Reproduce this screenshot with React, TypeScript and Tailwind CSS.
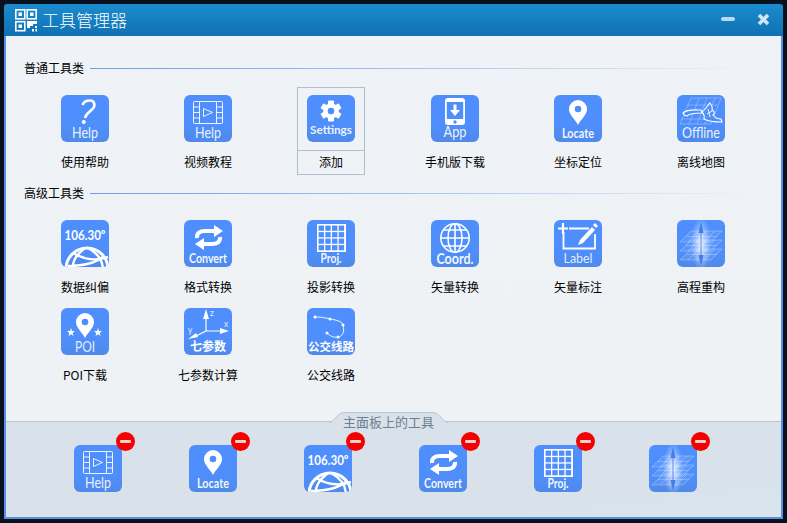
import type { ReactNode } from "react";

const cjk = "font-['Noto_Sans_CJK_SC','Noto_Sans',sans-serif]";

function Cap({ children, size = 14.5, y = 43, o = 0.9, w = 400, len }: { children: ReactNode; size?: number; y?: number; o?: number; w?: number; len?: number }) {
  return (
    <text
      x="24"
      y={y}
      textAnchor="middle"
      fontSize={size}
      fontWeight={w}
      fill="white"
      fillOpacity={o}
      textLength={len}
      lengthAdjust="spacingAndGlyphs"
      fontFamily="Lato,'Noto Sans CJK SC',sans-serif"
    >
      {children}
    </text>
  );
}

function Pin({ cy = 14, r = 9, tip = 30, hole = 3.3 }: { cy?: number; r?: number; tip?: number; hole?: number }) {
  return (
    <>
      <path d={`M24 ${tip} C21 ${tip - 6} ${24 - r} ${cy + 6} ${24 - r} ${cy} A${r} ${r} 0 0 1 ${24 + r} ${cy} C${24 + r} ${cy + 6} 27 ${tip - 6} 24 ${tip}Z`} fill="white" />
      <circle cx="24" cy={cy} r={hole} fill="#4f8ffb" />
    </>
  );
}

function Film() {
  return (
    <g fill="none" stroke="white" strokeOpacity="0.9" strokeWidth="1">
      <rect x="9.500" y="6.500" width="29" height="22" rx="1" />
      <path d="M15.500 6.500V28.500M32.500 6.500V28.500M9.500 12H15.500M9.500 17.500H15.500M9.500 23H15.500M32.500 12H38.500M32.500 17.500H38.500M32.500 23H38.500" />
      <path d="M19.500 13.500L28.500 17.500L19.500 21.500Z" />
    </g>
  );
}

function Globe() {
  return (
    <g fill="none" stroke="white" strokeWidth="3">
      <circle cx="26" cy="49" r="21" />
      <path d="M12 33C24 40 36 41 47 37M7 46C20 46 34 44 43 36M24 28C14 36 11 42 12 50M27 28C38 34 42 42 42 50" strokeWidth="2.400" />
    </g>
  );
}

function Grid4() {
  const cells = [0, 1, 2, 3];
  return (
    <g>
      <rect x="10" y="4" width="29" height="28" fill="white" />
      {cells.map((r) =>
        cells.map((c) => <rect key={`${r}-${c}`} x={11.6 + c * 6.7} y={5.6 + r * 6.5} width="5.4" height="5.2" fill="#4f8ffb" />),
      )}
    </g>
  );
}

function Arrows() {
  return (
    <g>
      <path d="M13 18C12.500 13 16 11 21 11H31M36 17C36.500 22 33 24 28 24H19" fill="none" stroke="white" strokeWidth="4" />
      <path d="M30 5L39 11L30 17ZM20 18L11 24L20 30Z" fill="white" />
    </g>
  );
}

function Plane({ y }: { y: number }) {
  return (
    <g fill="white" fillOpacity="0.08" stroke="white" strokeOpacity="0.38" strokeWidth="0.7">
      <path d={`M3 ${y + 7}L14 ${y - 4}H45L34 ${y + 7}Z`} />
      <path d={`M9 ${y + 1.5}H40M11 ${y + 7}L22 ${y - 4}M19 ${y + 7}L30 ${y - 4}M27 ${y + 7}L38 ${y - 4}`} fill="none" />
    </g>
  );
}

function Elevation() {
  return (
    <g>
      <defs>
        <radialGradient id="elev-glow">
          <stop offset="0" stopColor="white" stopOpacity="0.9" />
          <stop offset="0.5" stopColor="white" stopOpacity="0.4" />
          <stop offset="1" stopColor="white" stopOpacity="0" />
        </radialGradient>
      </defs>
      <ellipse cx="24" cy="24" rx="10" ry="27" fill="url(#elev-glow)" />
      <Plane y={15} />
      <Plane y={24} />
      <Plane y={33} />
      <path d="M24 7V41" stroke="#3f7fe6" strokeWidth="0.900" />
      <path d="M24 2L26.500 13H21.500ZM24 46L26.500 35H21.500Z" fill="#3f7fe6" />
    </g>
  );
}

function Gear() {
  return (
    <g>
      {[0, 60, 120, 180, 240, 300].map((a) => (
        <rect key={a} x="21" y="5.500" width="6" height="5" rx="1" fill="white" transform={`rotate(${a} 24 16)`} />
      ))}
      <circle cx="24" cy="16" r="7.800" fill="white" />
      <circle cx="24" cy="16" r="3.300" fill="#4f8ffb" />
    </g>
  );
}

function Drawing({ name }: { name: string }) {
  switch (name) {
    case "help":
      return (
        <>
          <path d="M21.500 10C22.500 7 26 5.500 29 5.500C33 5.500 34 9 33 12C31 16 25.500 17 24 23" fill="none" stroke="white" strokeWidth="2.600" />
          <circle cx="22.800" cy="27" r="2" fill="white" />
          <Cap len={26}>Help</Cap>
        </>
      );
    case "video":
      return (
        <>
          <Film />
          <Cap len={26}>Help</Cap>
        </>
      );
    case "settings":
      return (
        <>
          <Gear />
          <Cap size={12} y={39} w={700} len={42}>Settings</Cap>
        </>
      );
    case "app":
      return (
        <>
          <rect x="14" y="3" width="20" height="27" rx="3" fill="white" />
          <rect x="15.800" y="7" width="16.400" height="17" fill="#4f8ffb" />
          <circle cx="24" cy="27" r="1.700" fill="#4f8ffb" />
          <path d="M22.500 9.500H25.500V15H29L24 21L19 15H22.500Z" fill="white" />
          <Cap y={42} len={23}>App</Cap>
        </>
      );
    case "locate":
      return (
        <>
          <Pin />
          <Cap size={14} w={700} o={0.95} len={32}>Locate</Cap>
        </>
      );
    case "offline":
      return (
        <>
          <g fill="none" stroke="white" strokeOpacity="0.35" strokeWidth="0.800">
            <path d="M14 3H44L34 29H3Z" />
            <path d="M10 10H41M6 17H38M4 24H36M22 3L12 29M30 3L20 29M38 3L28 29" />
          </g>
          <path d="M6 18C10 14 18 15 24 15L25 18C20 18 13 18 10 21C8 21 7 20 6 18Z" fill="#4f8ffb" stroke="white" strokeWidth="1.100" />
          <path d="M33 8C35 11 36 13 35 15C38 17 38 19 36 20C38 23 41 24 44 24L45 27C39 27 32 27 27 24C28 20 26 18 25 17C28 15 30 11 33 8Z" fill="#4f8ffb" stroke="white" strokeWidth="1.100" />
          <path d="M31 14L33 22M35 16L30 19" fill="none" stroke="white" strokeWidth="0.900" />
          <Cap len={38}>Offline</Cap>
        </>
      );
    case "coord":
      return (
        <>
          <g fill="none" stroke="white" strokeWidth="1.600">
            <circle cx="24" cy="18" r="14.200" />
            <ellipse cx="24" cy="18" rx="7" ry="14.200" />
            <path d="M24 4V32M10 18H38M12.500 10H35.500M12.500 26H35.500" />
          </g>
          <Cap w={700} y={44} o={0.95} len={37}>Coord.</Cap>
        </>
      );
    case "degree":
      return (
        <>
          <text x="24" y="20" textAnchor="middle" fontSize="13.500" fontWeight="700" textLength={41} lengthAdjust="spacingAndGlyphs" fill="white" fontFamily="Lato,sans-serif">
            106.30º
          </text>
          <Globe />
        </>
      );
    case "convert":
      return (
        <>
          <Arrows />
          <Cap size={12.5} w={700} o={0.95} len={38}>Convert</Cap>
        </>
      );
    case "proj":
      return (
        <>
          <Grid4 />
          <Cap size={14} w={700} y={43} o={0.95} len={21}>Proj.</Cap>
        </>
      );
    case "label":
      return (
        <>
          <path d="M9.500 12V28.500H41V14M15 8.500H35" fill="none" stroke="white" strokeWidth="1.800" />
          <path d="M9 3V14M4 8.500H14" fill="none" stroke="white" strokeWidth="2.200" />
          <path d="M24 25L26 20L38 7L41 10L29 23Z" fill="white" />
          <path d="M39 5L41 3L44 6L42 8Z" fill="white" />
          <Cap size={14} o={0.85} len={29}>Label</Cap>
        </>
      );
    case "elevation":
      return <Elevation />;
    case "poi":
      return (
        <>
          <Pin cy={14} />
          <path d="M10 20L11 23H14L11.700 25L12.500 28L10 26.200L7.500 28L8.300 25L6 23H9ZM37 20L38 23H41L38.700 25L39.500 28L37 26.200L34.500 28L35.300 25L33 23H36Z" fill="white" />
          <Cap y={44} o={0.85} len={20}>POI</Cap>
        </>
      );
    case "seven":
      return (
        <>
          <path d="M22 8V23L38 23M22 23L10 29" fill="none" stroke="white" strokeWidth="1.200" />
          <path d="M22 1L25 11H19ZM45 23L36 26V20ZM4 31L12 25L14 29Z" fill="white" />
          <g fontSize="8.500" fill="white" fillOpacity="0.85" fontFamily="Lato,sans-serif">
            <text x="26" y="8">z</text>
            <text x="40" y="19">x</text>
            <text x="4" y="25">y</text>
          </g>
          <Cap size={12} w={700} o={1}>七参数</Cap>
        </>
      );
    default:
      return (
        <>
          <path d="M8 9C14 9 20 10 23 11C30 12 36 14 36 17C38 24 35 29 31 29C27 30 23 28 20 25" fill="none" stroke="white" strokeWidth="0.900" />
          {[[8, 9], [23, 11], [36, 17], [20, 25], [31, 29]].map(([x, y]) => (
            <circle key={x} cx={x} cy={y} r="1.500" fill="white" />
          ))}
          <Cap size={11.5} w={700} o={1}>公交线路</Cap>
        </>
      );
  }
}

function Tile({ name }: { name: string }) {
  return (
    <div className="w-[48px] h-[47px] shrink-0 rounded-[6px] bg-gradient-to-b from-[#4f8ffd] from-60% to-[#4f8aea] overflow-hidden">
      <svg width="48" height="47" viewBox="0 0 48 47">
        <Drawing name={name} />
      </svg>
    </div>
  );
}

function Tool({ name, label, boxed }: { name: string; label: string; boxed?: boolean }) {
  return (
    <div className="relative ml-[38px] w-[48px] flex flex-col items-center">
      {boxed && (
        <div className="absolute left-[-10px] top-[-8px] w-[68px] h-[88px] border border-[#b0bfd0]">
          <div className="mt-[62px] border-t border-[#b0bfd0]" />
        </div>
      )}
      <Tile name={name} />
      <div className={`mt-[12px] h-[16px] leading-[16px] text-[12px] text-black whitespace-nowrap ${cjk}`}>{label}</div>
    </div>
  );
}

function Heading({ title }: { title: string }) {
  return (
    <div className="flex items-center h-[16px] pl-[18px] pr-[26px]">
      <span className={`w-[66px] text-[12px] leading-[16px] text-black whitespace-nowrap ${cjk}`}>{title}</span>
      <div className="flex-1 h-px bg-gradient-to-r from-[#6f9ee8] via-[#a9c4ee] to-transparent" />
    </div>
  );
}

const columns = "grid grid-cols-[123px_123px_124px_123px_123px_123px] auto-rows-[88px] pl-[17px]";

const panelTools = ["video", "locate", "degree", "convert", "proj", "elevation"];

export default function App() {
  return (
    <div className="w-[787px] h-[523px] overflow-hidden bg-[#07121e] pl-[4px] pt-[4px] font-['Noto_Sans','Noto_Sans_CJK_SC',sans-serif]">
      <div className="w-[779px] h-[515px] flex flex-col">
        {/* Title bar */}
        <div className="h-[32px] shrink-0 flex items-center rounded-t-[3px] bg-gradient-to-b from-[#1b8cce] to-[#0f71b3] pl-[11px] pr-[13px]">
          <svg width="22" height="23" viewBox="0 0 22 23" className="shrink-0">
            <g fill="none" stroke="white" strokeWidth="1.600">
              <rect x="0.800" y="0.800" width="9" height="9" />
              <rect x="12.200" y="0.800" width="9" height="9" />
              <rect x="0.800" y="12.700" width="9" height="9" />
            </g>
            <path d="M3.500 3.500H7V7H3.500ZM15 3.500H18.500V7H15ZM3.500 15.500H7V19H3.500ZM12 12H22V15H18V17H15V19H12ZM20 17H22V19H20ZM17 20H19V22.500H17ZM20.500 20H22V22.500H20.500Z" fill="white" />
          </svg>
          <span className={`ml-[5px] text-[17px] font-light leading-[24px] text-white whitespace-nowrap ${cjk}`}>工具管理器</span>
          <div className="ml-auto w-[14px] h-[4px] mb-[3px] rounded-full bg-[#b9dcf0]" />
          <svg width="13" height="13" viewBox="0 0 13 13" className="ml-[22px] shrink-0 mb-[2px]">
            <path d="M2 2L11 11M11 2L2 11" stroke="#cfe6f3" strokeWidth="3.600" />
          </svg>
        </div>

        {/* Body */}
        <div className="flex-1 min-h-0 flex flex-col border-x-2 border-b-2 border-[#5a8de4] bg-[#eff3f6]">
          <div className="flex-1 min-h-0 pt-[24px] bg-gradient-to-b from-[#eff3f7] to-[#eef2f5]">
            <Heading title="普通工具类" />
            <div className={`mt-[19px] ${columns}`}>
              <Tool name="help" label="使用帮助" />
              <Tool name="video" label="视频教程" />
              <Tool name="settings" label="添加" boxed />
              <Tool name="app" label="手机版下载" />
              <Tool name="locate" label="坐标定位" />
              <Tool name="offline" label="离线地图" />
            </div>
            <div className="mt-[2px]">
              <Heading title="高级工具类" />
            </div>
            <div className={`mt-[19px] ${columns}`}>
              <Tool name="degree" label="数据纠偏" />
              <Tool name="convert" label="格式转换" />
              <Tool name="proj" label="投影转换" />
              <Tool name="coord" label="矢量转换" />
              <Tool name="label" label="矢量标注" />
              <Tool name="elevation" label="高程重构" />
              <Tool name="poi" label="POI下载" />
              <Tool name="seven" label="七参数计算" />
              <Tool name="bus" label="公交线路" />
            </div>
          </div>

          {/* Tools pinned to the main panel */}
          <div className="relative h-[96px] shrink-0 border-t border-[#bcc5cc] bg-gradient-to-br from-[#d9e2ea] from-70% to-[#d9e4ec] flex gap-[67px] pl-[68px] pt-[23px]">
            <div className="absolute left-[323px] top-[-10px] w-[119px] h-[11px]">
              <svg width="119" height="11" viewBox="0 0 119 11" className="block">
                <path d="M0 10.500C6 10.500 7 0.500 16 0.500H103C112 0.500 113 10.500 119 10.500Z" fill="#d9e2ea" />
                <path d="M0 10.500C6 10.500 7 0.500 16 0.500H103C112 0.500 113 10.500 119 10.500" fill="none" stroke="#bcc5cc" />
              </svg>
            </div>
            <div className={`absolute left-[337px] top-[-9px] h-[18px] text-[13px] leading-[18px] text-[#6c7f90] whitespace-nowrap ${cjk}`}>主面板上的工具</div>
            {panelTools.map((name) => (
              <div key={name} className="relative w-[48px]">
                <Tile name={name} />
                <div className="absolute left-[42px] top-[-13px] w-[19px] h-[19px] rounded-full bg-[#f60000] flex items-center justify-center">
                  <div className="w-[11px] h-[3px] rounded-[1px] bg-[#e6d6d6]" />
                </div>
              </div>
            ))}
          </div>
        </div>
      </div>
    </div>
  );
}
